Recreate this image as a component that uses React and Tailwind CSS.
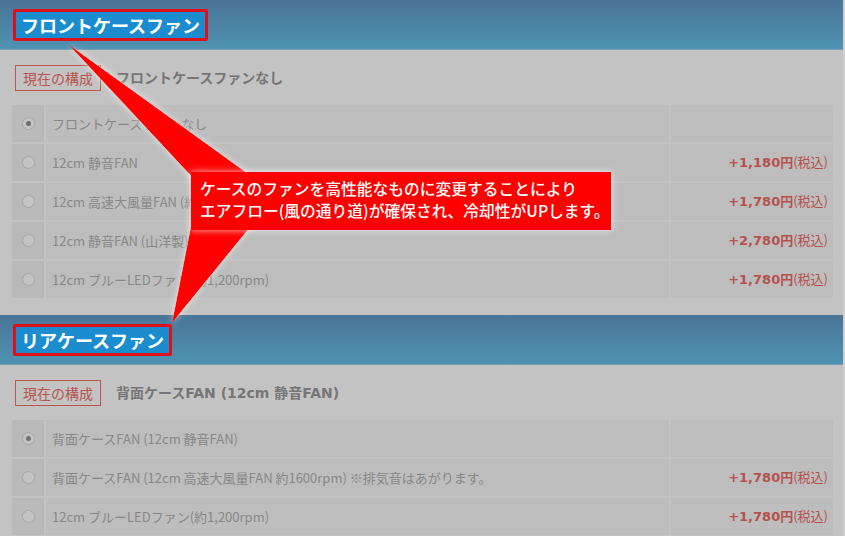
const jp = { fontFamily: '"Noto Sans CJK JP", "Noto Sans", sans-serif' };
const wide = { fontFamily: '"DejaVu Sans", "Noto Sans CJK JP", sans-serif' };

const sections = [
    {
        title: "フロントケースファン",
        current: "フロントケースファンなし",
        rows: [
            { label: "フロントケースファンなし", price: null, checked: true },
            { label: "12cm 静音FAN", price: "+1,180" },
            { label: "12cm 高速大風量FAN (約1600rpm)", price: "+1,780" },
            { label: "12cm 静音FAN (山洋製)", price: "+2,780" },
            { label: "12cm ブルーLEDファン(約1,200rpm)", price: "+1,780" },
        ],
    },
    {
        title: "リアケースファン",
        current: "背面ケースFAN (12cm 静音FAN)",
        rows: [
            { label: "背面ケースFAN (12cm 静音FAN)", price: null, checked: true },
            { label: "背面ケースFAN (12cm 高速大風量FAN 約1600rpm) ※排気音はあがります。", price: "+1,780" },
            { label: "12cm ブルーLEDファン(約1,200rpm)", price: "+1,780" },
        ],
    },
];

function Radio({ checked }) {
    return (
        <span className="w-[13px] h-[13px] rounded-full border border-[#a6a6a6] bg-[#c4c4c4] flex items-center justify-center">
            {checked && <span className="w-[5px] h-[5px] rounded-full bg-[#6f6f6f]" />}
        </span>
    );
}

function Section({ data }) {
    return (
        <section>
            <div className="h-[50px] bg-gradient-to-b from-[#4a7496] to-[#4e93b2] border-b border-[#7a9fb3] flex items-center pl-[13px]">
                <h2 className="h-[32px] px-[5px] flex items-center border-[3px] border-[#e0101a] rounded-[2px] bg-[#1b8dcf] text-white text-[18px] font-bold leading-none">
                    {data.title}
                </h2>
            </div>
            <div className="px-[12px] pt-[15px] pb-[17px]">
                <div className="flex items-center gap-[15px] ml-[3px] mb-[14px]">
                    <span className="h-[26px] px-[7px] flex items-center border border-[#bd5550] text-[#b8544f] text-[14px]">
                        現在の構成
                    </span>
                    <span className="text-[14px] font-bold text-[#767676]" style={wide}>{data.current}</span>
                </div>
                <div className="flex flex-col gap-[2px] w-[821px]">
                    {data.rows.map((row, i) => (
                        <div key={i} className="flex gap-[2px] h-[37px]">
                            <div className="w-[32px] bg-[#b9b9b9] flex items-center justify-center">
                                <Radio checked={row.checked} />
                            </div>
                            <div className="flex-1 bg-[#bdbdbd] flex items-center pl-[6px] text-[13px] text-[#888888] whitespace-nowrap">
                                {row.label}
                            </div>
                            <div className="w-[162px] bg-[#bdbdbd] flex items-center justify-end pr-[5px] text-[#b5524d]">
                                {row.price && (
                                    <span className="text-[13px] font-bold" style={wide}>
                                        {row.price}円<span className="text-[13px] font-normal" style={jp}>(税込)</span>
                                    </span>
                                )}
                            </div>
                        </div>
                    ))}
                </div>
            </div>
        </section>
    );
}

export default function App() {
    return (
        <div className="relative w-[845px] h-[536px] overflow-hidden bg-[#c3c3c3] border-r-2 border-[#d0d0d0]" style={jp}>
            {sections.map((s) => (
                <Section key={s.title} data={s} />
            ))}

            {/* callout overlay */}
            <svg className="absolute inset-0 pointer-events-none" width="845" height="536">
                <defs>
                    <filter id="glow" x="-20%" y="-20%" width="140%" height="140%">
                        <feDropShadow dx="0" dy="0" stdDeviation="3" floodColor="#ffffff" floodOpacity="0.7" />
                    </filter>
                </defs>
                <g filter="url(#glow)" fill="#ff0000">
                    <polygon points="68,44 193,178 254,178" />
                    <polygon points="191,226 251,226 172,323" />
                </g>
            </svg>
            <div className="absolute left-[191px] top-[172px] w-[420px] h-[58px] bg-[#ff0000] shadow-[0_0_7px_rgba(255,255,255,0.75)] pl-[9px] pt-[6px] text-white text-[15.75px] font-medium leading-[22px] whitespace-nowrap">
                ケースのファンを高性能なものに変更することにより
                <br />
                エアフロー(風の通り道)が確保され、冷却性がUPします。
            </div>
        </div>
    );
}
